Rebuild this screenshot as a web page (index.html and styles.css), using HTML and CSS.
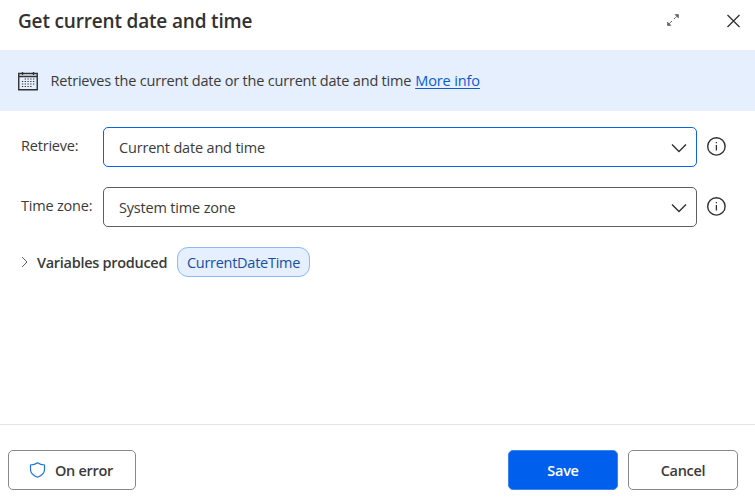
FILE: index.html
```html
<!DOCTYPE html>
<html lang="en">
<head>
<meta charset="utf-8">
<title>Get current date and time</title>
<link rel="stylesheet" href="styles.css">
</head>
<body>
<main class="dialog">
  <header class="titlebar">
    <h1 class="title">Get current date and time</h1>
    <svg class="expand" width="14" height="14" viewBox="0 0 14 14"><path class="shaft" d="M8 6l4-4M6 8l-4 4"/><path class="head" d="M9 1.500h3.500V5zM1.500 9v3.500H5z"/></svg>
    <svg class="close" width="14" height="14" viewBox="0 0 14 14"><path d="M.5 1l12 12M12.500 1L.5 13"/></svg>
  </header>
  <section class="banner">
    <svg class="calendar" width="20" height="20" viewBox="0 0 20 20">
      <path class="frame" d="M.75 2.500h18.500v16.250H.75zM.75 5.500h18.500M4.500 1v3M15.500 1v3"/>
      <path class="days" d="M6.700 8h10.500M3.900 10.500h13.300M3.900 13h13.300M3.900 15.500h10.500"/>
    </svg>
    <p class="description">Retrieves the current date or the current date and time</p>
    <a class="link" href="#">More info</a>
  </section>
  <section class="form">
    <div class="row">
      <span class="label">Retrieve:</span>
      <div class="select focused"><span class="value">Current date and time</span>
        <svg class="chevron" width="16" height="10" viewBox="0 0 16 10"><path d="M1 1.500l7 7 7-7"/></svg></div>
      <svg class="info" width="20" height="20" viewBox="0 0 20 20"><circle cx="10.400" cy="10.400" r="8.700"/><path class="letter" d="M10.400 9v5.500M10.400 6v1.300"/></svg>
    </div>
    <div class="row">
      <span class="label">Time zone:</span>
      <div class="select"><span class="value">System time zone</span>
        <svg class="chevron" width="16" height="10" viewBox="0 0 16 10"><path d="M1 1.500l7 7 7-7"/></svg></div>
      <svg class="info" width="20" height="20" viewBox="0 0 20 20"><circle cx="10.400" cy="10.400" r="8.700"/><path class="letter" d="M10.400 9v5.500M10.400 6v1.300"/></svg>
    </div>
    <div class="variables">
      <svg class="caret" width="8" height="12" viewBox="0 0 8 12"><path d="M1 1l5 5-5 5"/></svg>
      <span class="variables-label">Variables produced</span>
      <span class="chip">CurrentDateTime</span>
    </div>
  </section>
  <footer class="footer">
    <button class="button on-error">
      <svg class="shield" width="16" height="16" viewBox="0 0 16 16"><path d="M8.500.8C6.500 2.300 4 3 1.500 3v4.500c0 3.800 3 6.200 7 7.700 4-1.500 7-3.900 7-7.700V3C13 3 10.500 2.300 8.500 .8z"/></svg>
      <span>On error</span>
    </button>
    <button class="button save">Save</button>
    <button class="button cancel">Cancel</button>
  </footer>
</main>
</body>
</html>
```
FILE: styles.css
```css
* { box-sizing: border-box; }
body { margin: 0; background: #fff; color: #3b3a39; font: 14.500px/20px "Open Sans", "Noto Sans", sans-serif; letter-spacing: -.2px; overflow: hidden; }
svg { display: block; flex: none; fill: none; stroke: #323130; }
span, p, a, h1 { white-space: nowrap; }
.dialog { display: flex; flex-direction: column; width: 755px; height: 502px; }
.titlebar { display: flex; align-items: center; height: 50px; padding: 0 14px 9px 18px; }
.title { margin: 0; color: #323130; font-size: 19px; line-height: 26px; font-weight: 600; letter-spacing: -.17px; }
.expand { margin-left: auto; margin-right: 47px; margin-top: -2px; }
.shaft { stroke-dasharray: 2.500 .8; opacity: .8; }
.head { fill: #605e5c; stroke: #605e5c; stroke-width: .6; }
.close { stroke-width: 1.300; }
.banner { display: flex; align-items: center; height: 61px; padding-left: 18px; background: #e5effe; }
.frame { stroke-width: 1.400; }
.days { stroke-width: 1.200; stroke-dasharray: 1.300 1.470; }
.description { margin: 0 4px 0 12.500px; }
.link { color: #0b5bd3; letter-spacing: -.12px; text-underline-offset: 2px; text-decoration-thickness: 1px; }
.form { flex: 1; padding: 16px 0 0 21px; }
.row { display: flex; height: 40px; margin-bottom: 20px; }
.label { width: 82px; padding-top: 9px; }
.select { display: flex; align-items: center; justify-content: space-between; width: 594px; height: 40px; padding: 1px 9px 0 15px; border: 1px solid #605e5c; border-radius: 5px; }
.focused { border-color: #0b62e4; }
.value { letter-spacing: -.18px; }
.chevron { stroke-width: 1.400; }
.info { margin: 9px 0 0 9px; stroke-width: 1.400; }
.letter { stroke-width: 1.300; }
.variables { display: flex; align-items: center; height: 30px; }
.caret { margin-right: 8px; stroke: #605e5c; }
.variables-label { width: 140px; padding-top: 1px; font-weight: 600; letter-spacing: -.29px; }
.chip { display: flex; align-items: center; justify-content: center; width: 133px; height: 30px; padding-top: 1px; border: 1px solid #8bb8fb; border-radius: 11px; background: #e5effe; color: #174ea6; letter-spacing: -.27px; }
.footer { display: flex; height: 78px; padding: 25px 17px 0 8px; border-top: 1px solid #e5e5e5; }
.button { display: flex; align-items: center; justify-content: center; width: 110px; height: 40px; padding: 1px 0 0; border: 1px solid #8a8886; border-radius: 5px; background: #fff; color: #3b3a39; font: 600 14.500px/20px "Open Sans", "Noto Sans", sans-serif; letter-spacing: -.3px; }
.on-error { width: 128px; margin-right: auto; padding-right: 2px; }
.shield { margin: -1px 10px 0 0; stroke: #1a73e8; stroke-width: 1.200; overflow: visible; }
.save { margin-right: 10px; background: #005fec; border-color: #3c83ee; color: #fff; }
```
